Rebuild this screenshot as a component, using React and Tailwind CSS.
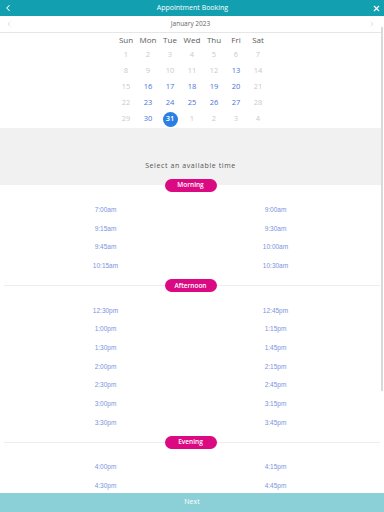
import { ChevronLeft, ChevronRight, X } from "lucide-react";

const weekDays = ["Sun", "Mon", "Tue", "Wed", "Thu", "Fri", "Sat"];

// [label, state] : state 0 = disabled, 1 = available, 2 = selected
const weeks = [
  [[1, 0], [2, 0], [3, 0], [4, 0], [5, 0], [6, 0], [7, 0]],
  [[8, 0], [9, 0], [10, 0], [11, 0], [12, 0], [13, 1], [14, 0]],
  [[15, 0], [16, 1], [17, 1], [18, 1], [19, 1], [20, 1], [21, 0]],
  [[22, 0], [23, 1], [24, 1], [25, 1], [26, 1], [27, 1], [28, 0]],
  [[29, 0], [30, 1], [31, 2], [1, 0], [2, 0], [3, 0], [4, 0]],
];

const sections = [
  {
    name: "Morning",
    times: ["7:00am", "9:00am", "9:15am", "9:30am", "9:45am", "10:00am", "10:15am", "10:30am"],
  },
  {
    name: "Afternoon",
    times: [
      "12:30pm", "12:45pm", "1:00pm", "1:15pm", "1:30pm", "1:45pm", "2:00pm",
      "2:15pm", "2:30pm", "2:45pm", "3:00pm", "3:15pm", "3:30pm", "3:45pm",
    ],
  },
  {
    name: "Evening",
    times: ["4:00pm", "4:15pm", "4:30pm", "4:45pm"],
  },
];

const Pill = ({ name }) => (
  <div className="flex h-[13px] w-[52px] items-center justify-center rounded-full bg-[#db0a83] text-[6.5px] font-semibold text-white">
    {name}
  </div>
);

const TimeGrid = ({ times }) => (
  <div className="mx-auto grid w-[340px] grid-cols-2 pt-[9px] pb-[4px]">
    {times.map((t) => (
      <div
        key={t}
        className="flex h-[18.67px] items-center justify-center font-['Liberation_Sans',Arial,sans-serif] text-[6.5px] text-[#7b93e0]"
      >
        {t}
      </div>
    ))}
  </div>
);

export default function App() {
  return (
    <div className="flex h-[512px] w-[384px] flex-col overflow-hidden bg-white font-['Open_Sans',sans-serif]">
      <div className="flex h-[16px] shrink-0 items-center justify-between bg-[#12a0b1] px-[3px] text-white">
        <ChevronLeft size={10} strokeWidth={2.5} />
        <span className="text-[7px] font-medium">Appointment Booking</span>
        <X size={9} strokeWidth={3} />
      </div>

      <div className="relative min-h-0 flex-1 overflow-hidden">
        <div className="w-[381px]">
          <div className="flex h-[17px] items-center justify-between border-b border-[#e6e6e6] px-[5px] text-[#d0d0d0]">
            <ChevronLeft size={8} />
            <span className="text-[6.5px] text-[#666]">January 2023</span>
            <ChevronRight size={8} />
          </div>

          <div className="ml-[115px] grid w-[154px] grid-cols-7 pb-[1px]">
            {weekDays.map((d) => (
              <div key={d} className="flex h-[14px] items-center justify-center text-[8px] text-[#5a5a5a]">
                {d}
              </div>
            ))}
            {weeks.flat().map(([n, s], i) => (
              <div key={i} className="flex h-[16px] items-center justify-center text-[7.5px]">
                {s === 2 ? (
                  <span className="flex h-[15px] w-[15px] items-center justify-center rounded-full bg-[#2a80e2] font-semibold text-white">
                    {n}
                  </span>
                ) : (
                  <span className={s === 1 ? "text-[#4774d8]" : "text-[#cacaca]"}>{n}</span>
                )}
              </div>
            ))}
          </div>

          <div className="flex h-[57px] items-end justify-center bg-[#f1f1f1] pb-[14px] text-[7px] tracking-[0.6px] text-[#555]">
            Select an available time
          </div>

          {sections.map((sec, i) => (
            <div key={sec.name}>
              <div className={`relative flex justify-center ${i === 0 ? "-mt-[6.5px]" : ""}`}>
                {i > 0 && <div className="absolute left-[4px] right-[1px] top-[6px] h-[1px] bg-[#ededed]" />}
                <div className="relative">
                  <Pill name={sec.name} />
                </div>
              </div>
              <TimeGrid times={sec.times} />
            </div>
          ))}
        </div>

        <div className="absolute right-[1px] top-[11px] h-[364px] w-[2px] bg-[#d9d9d9]" />
      </div>

      <div className="flex h-[19px] shrink-0 items-center justify-center bg-[#8bd0d7] text-[7px] text-white">
        Next
      </div>
    </div>
  );
}
